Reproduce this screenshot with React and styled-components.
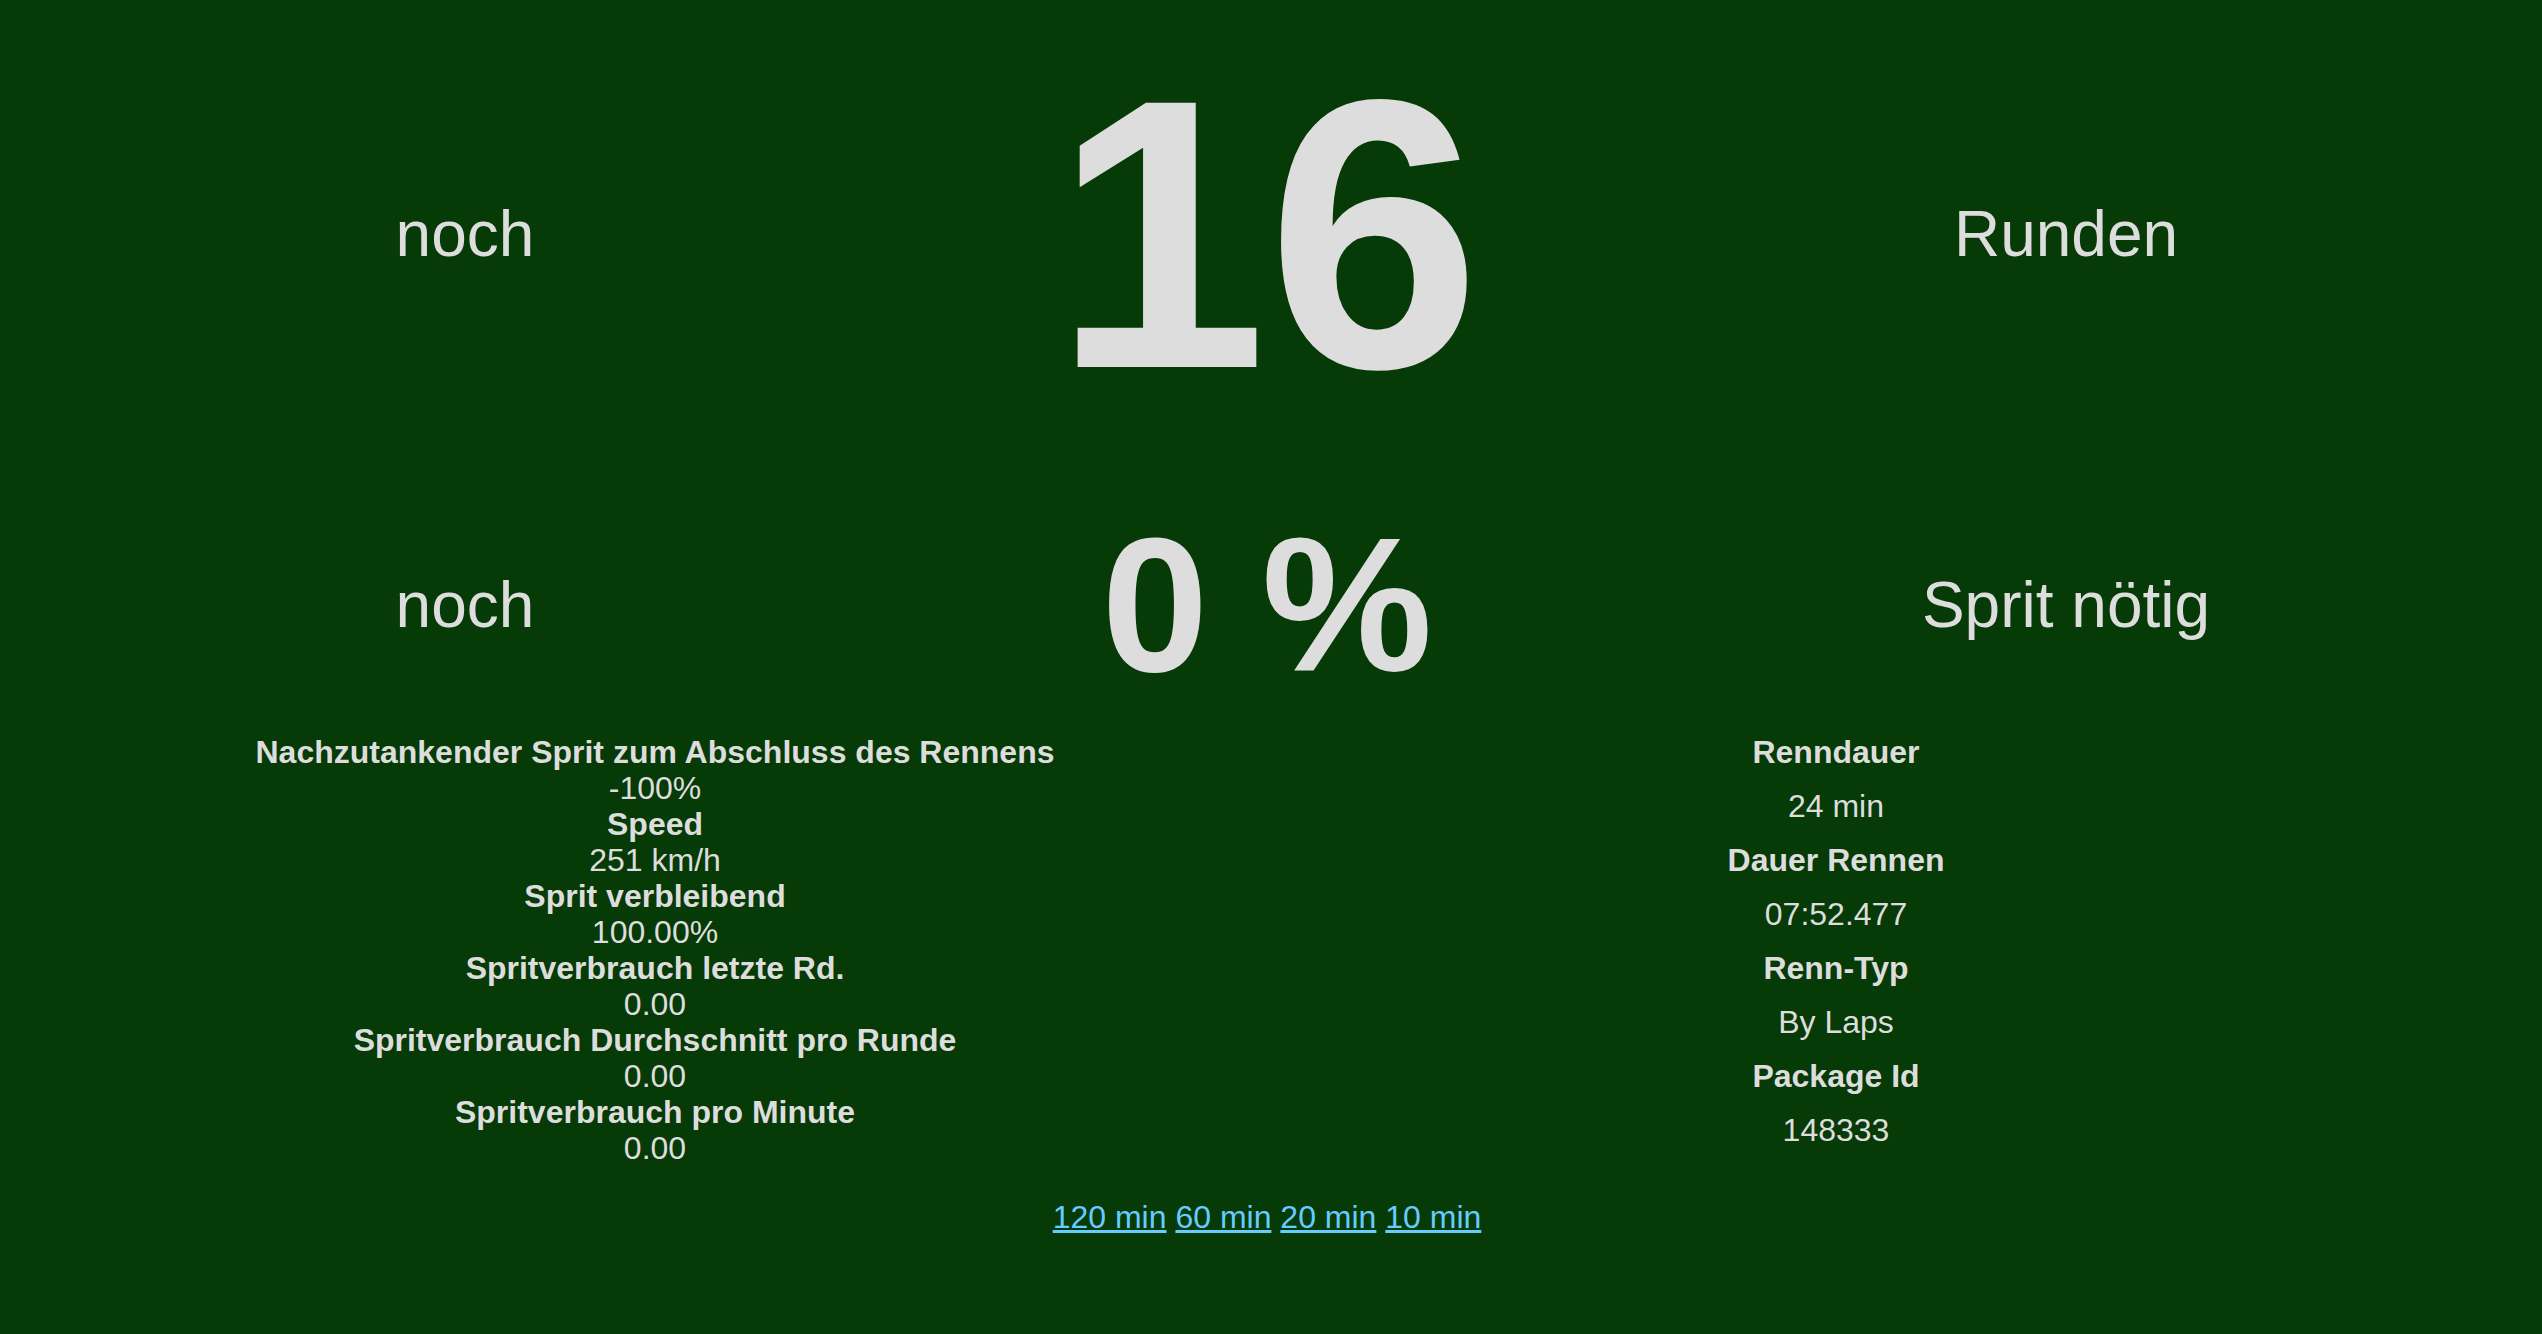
import styled, { createGlobalStyle } from 'styled-components'

const GlobalStyle = createGlobalStyle`
    html, body {
        margin: 0;
        background: #063a06;
    }
    body {
        font-family: "Liberation Sans", Arial, sans-serif;
        color: #dddddd;
    }
`

const Page = styled.div`
    padding: 8px 8px 0;
    min-height: 1326px;
`

const HeroRow = styled.div`
    display: grid;
    grid-template-columns: 914px 690px 908px;
    align-items: center;
    height: ${props => props.height}px;
    margin-top: ${props => props.offset || 0}px;
`

const Label = styled.div`
    font-size: 64px;
    text-align: center;
`

const BigValue = styled.div`
    font-size: ${props => props.size}px;
    font-weight: bold;
    text-align: center;
    white-space: nowrap;
`

const Details = styled.div`
    display: grid;
    grid-template-columns: 1294px 1068px;
    align-items: start;
    margin-top: 11px;
    font-size: 32px;
    text-align: center;
`

const FuelList = styled.div`
    padding-top: 9px;
    line-height: 36px;
`

const RaceList = styled.div`
    line-height: 54px;
`

const Title = styled.div`
    font-weight: bold;
`

const Value = styled.div``

const Links = styled.div`
    margin-top: 33px;
    font-size: 32px;
    text-align: center;
    padding-right: 8px;

    a {
        color: #66ccff;
        text-decoration: underline;
    }
`

const fuel = [
    ['Nachzutankender Sprit zum Abschluss des Rennens', '-100%'],
    ['Speed', '251 km/h'],
    ['Sprit verbleibend', '100.00%'],
    ['Spritverbrauch letzte Rd.', '0.00'],
    ['Spritverbrauch Durchschnitt pro Runde', '0.00'],
    ['Spritverbrauch pro Minute', '0.00'],
]

const race = [
    ['Renndauer', '24 min'],
    ['Dauer Rennen', '07:52.477'],
    ['Renn-Typ', 'By Laps'],
    ['Package Id', '148333'],
]

const ranges = ['120 min', '60 min', '20 min', '10 min']

export default function App() {
    return (
        <Page>
            <GlobalStyle />
            <HeroRow height={444} offset={4}>
                <Label>noch</Label>
                <BigValue size={384}>16</BigValue>
                <Label>Runden</Label>
            </HeroRow>
            <HeroRow height={220} offset={38}>
                <Label>noch</Label>
                <BigValue size={192}>0 %</BigValue>
                <Label>Sprit nötig</Label>
            </HeroRow>
            <Details>
                <FuelList>
                    {fuel.map(([title, value]) => (
                        <div key={title}>
                            <Title>{title}</Title>
                            <Value>{value}</Value>
                        </div>
                    ))}
                </FuelList>
                <RaceList>
                    {race.map(([title, value]) => (
                        <div key={title}>
                            <Title>{title}</Title>
                            <Value>{value}</Value>
                        </div>
                    ))}
                </RaceList>
            </Details>
            <Links>
                {ranges.map((r, i) => (
                    <span key={r}>
                        {i > 0 && ' '}
                        <a href="#">{r}</a>
                    </span>
                ))}
            </Links>
        </Page>
    )
}
